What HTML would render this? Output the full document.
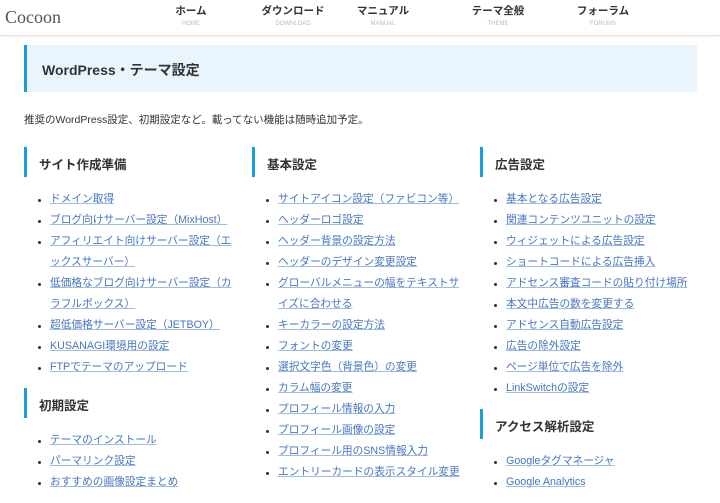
<!DOCTYPE html>
<html><head><meta charset="utf-8"><style>
*{margin:0;padding:0;box-sizing:border-box}
body{width:720px;height:480px;overflow:hidden;background:#fff;font-family:"Liberation Sans","Noto Sans CJK JP",sans-serif;color:#333;position:relative}
.hdr{height:36px;border-bottom:1px solid #e3e3e3;box-shadow:0 1px 2px rgba(0,0,0,.06);position:relative}
.logo{position:absolute;left:5px;top:7px;font-family:"Liberation Serif",serif;font-size:18px;color:#555}
.nav{position:absolute;top:5px;text-align:center;width:90px;margin-left:-45px}
.nav b{display:block;font-size:10.5px;color:#333;font-weight:bold;line-height:13px}
.nav i{display:block;font-style:normal;font-size:6px;color:#bbb;margin-top:3px}
.title{position:absolute;left:24px;top:45px;width:673px;height:47px;background:#eaf4fc;border-left:3px solid #1a9ce0;font-size:14px;font-weight:bold;padding:15px 0 0 15px;color:#333}
.desc{position:absolute;left:24px;top:112px;font-size:10.5px;color:#333}
.col{position:absolute;top:147px;width:215px}
h3{height:30px;border-left:3px solid #1a9ce0;font-size:12.5px;font-weight:bold;padding:7px 0 0 12px;margin-bottom:12px}
ul{list-style:none;margin-bottom:10px}
li{font-size:10.7px;line-height:21px;padding-left:26px;position:relative;white-space:nowrap}
li:before{content:"";position:absolute;left:14px;top:10px;width:3px;height:3px;background:#333;border-radius:50%}
li span{color:#4675c6;text-decoration:underline;text-decoration-color:#9bbde8}
</style></head><body>
<div class="hdr"><div class="logo">Cocoon</div>
<div class="nav" style="left:191px"><b>ホーム</b><i>HOME</i></div>
<div class="nav" style="left:293px"><b>ダウンロード</b><i>DOWNLOAD</i></div>
<div class="nav" style="left:383px"><b>マニュアル</b><i>MANUAL</i></div>
<div class="nav" style="left:498px"><b>テーマ全般</b><i>THEME</i></div>
<div class="nav" style="left:603px"><b>フォーラム</b><i>FORUMS</i></div>
</div>
<div class="title">WordPress・テーマ設定</div>
<div class="desc">推奨のWordPress設定、初期設定など。載ってない機能は随時追加予定。</div>
<div class="col" style="left:24px"><h3>サイト作成準備</h3><ul>
<li><span>ドメイン取得</span></li>
<li><span>ブログ向けサーバー設定（MixHost）</span></li>
<li><span>アフィリエイト向けサーバー設定（エ<br>ックスサーバー）</span></li>
<li><span>低価格なブログ向けサーバー設定（カ<br>ラフルボックス）</span></li>
<li><span>超低価格サーバー設定（JETBOY）</span></li>
<li><span>KUSANAGI環境用の設定</span></li>
<li><span>FTPでテーマのアップロード</span></li></ul>
<h3>初期設定</h3><ul>
<li><span>テーマのインストール</span></li>
<li><span>パーマリンク設定</span></li>
<li><span>おすすめの画像設定まとめ</span></li></ul></div>
<div class="col" style="left:252px"><h3>基本設定</h3><ul>
<li><span>サイトアイコン設定（ファビコン等）</span></li>
<li><span>ヘッダーロゴ設定</span></li>
<li><span>ヘッダー背景の設定方法</span></li>
<li><span>ヘッダーのデザイン変更設定</span></li>
<li><span>グローバルメニューの幅をテキストサ<br>イズに合わせる</span></li>
<li><span>キーカラーの設定方法</span></li>
<li><span>フォントの変更</span></li>
<li><span>選択文字色（背景色）の変更</span></li>
<li><span>カラム幅の変更</span></li>
<li><span>プロフィール情報の入力</span></li>
<li><span>プロフィール画像の設定</span></li>
<li><span>プロフィール用のSNS情報入力</span></li>
<li><span>エントリーカードの表示スタイル変更</span></li></ul></div>
<div class="col" style="left:480px"><h3>広告設定</h3><ul>
<li><span>基本となる広告設定</span></li>
<li><span>関連コンテンツユニットの設定</span></li>
<li><span>ウィジェットによる広告設定</span></li>
<li><span>ショートコードによる広告挿入</span></li>
<li><span>アドセンス審査コードの貼り付け場所</span></li>
<li><span>本文中広告の数を変更する</span></li>
<li><span>アドセンス自動広告設定</span></li>
<li><span>広告の除外設定</span></li>
<li><span>ページ単位で広告を除外</span></li>
<li><span>LinkSwitchの設定</span></li></ul>
<h3>アクセス解析設定</h3><ul>
<li><span>Googleタグマネージャ</span></li>
<li><span>Google Analytics</span></li></ul></div>
</body></html>
